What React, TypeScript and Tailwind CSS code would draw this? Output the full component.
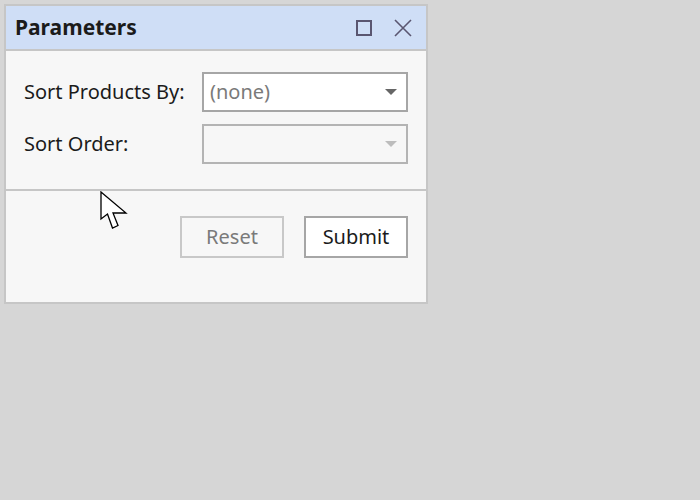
import React from "react";

const font = { fontFamily: '"Noto Sans", "Open Sans", sans-serif' };

function Caret({ color }: { color: string }) {
  return (
    <svg width="12" height="7" viewBox="0 0 12 7">
      <path d="M0 0 H12 L6 6 Z" fill={color} />
    </svg>
  );
}

export default function App() {
  return (
    <div className="relative h-[500px] w-[700px] bg-[#d6d6d6] pl-[4px] pt-[4px]" style={font}>
      <div className="flex h-[300px] w-[424px] flex-col border-2 border-[#c6c6c6] bg-[#f7f7f7]">
        <div className="flex h-[45px] shrink-0 items-center border-b-2 border-[#c6c6c6] bg-[#cfdef6] pl-[9px] pr-[14px]">
          <span className="flex-1 text-[21px] font-bold leading-none text-[#1b1b1b]">Parameters</span>
          <svg width="16" height="16" viewBox="0 0 16 16" className="mr-[22px]">
            <rect x="1" y="1" width="14" height="14" fill="none" stroke="#5a5670" strokeWidth="2" />
          </svg>
          <svg width="18" height="18" viewBox="0 0 18 18">
            <path d="M1 1 L17 17 M17 1 L1 17" stroke="#5a5670" strokeWidth="1.6" />
          </svg>
        </div>
        <div className="flex h-[138px] shrink-0 flex-col gap-[12px] pl-[18px] pr-[18px] pt-[21px]">
          <div className="flex h-[40px] items-center">
            <span className="flex-1 text-[20px] text-[#1b1b1b]">Sort Products By:</span>
            <div className="flex h-[40px] w-[206px] items-center justify-between border-2 border-[#a6a6a6] bg-white pl-[6px] pr-[9px]">
              <span className="text-[20px] text-[#7a7a7a]">(none)</span>
              <Caret color="#666666" />
            </div>
          </div>
          <div className="flex h-[40px] items-center">
            <span className="flex-1 text-[20px] text-[#1b1b1b]">Sort Order:</span>
            <div className="flex h-[40px] w-[206px] items-center justify-end border-2 border-[#b4b4b4] bg-[#f7f7f7] pr-[9px]">
              <Caret color="#bdbdbd" />
            </div>
          </div>
        </div>
        <div className="h-[2px] shrink-0 bg-[#c6c6c6]" />
        <div className="flex flex-1 justify-end gap-[20px] pr-[18px] pt-[25px]">
          <div className="flex h-[42px] w-[104px] items-center justify-center border-2 border-[#c8c8c8] text-[20px] text-[#7a7a7a]">
            Reset
          </div>
          <div className="flex h-[42px] w-[104px] items-center justify-center border-2 border-[#a6a6a6] bg-white text-[20px] text-[#1b1b1b]">
            Submit
          </div>
        </div>
      </div>
      <svg className="absolute left-[100px] top-[191px]" width="30" height="42" viewBox="0 0 30 42">
        <path d="M1 1 L1 28 L7.5 23 L12.5 37 L18 34.5 L13 22 L26 22 Z" fill="white" stroke="black" strokeWidth="1.3" strokeLinejoin="miter" />
      </svg>
    </div>
  );
}
